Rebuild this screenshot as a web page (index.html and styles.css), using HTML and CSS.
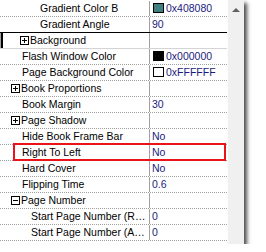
FILE: index.html
```html
<!DOCTYPE html>
<html>
  <head>
    <title>Properties</title>
    <link rel="stylesheet" href="styles.css">
  </head>
<body>
<div class = 'panel'>
  <div class = 'grid'>
    <div class = 'row'>
      <div class = 'name lv3'>Gradient Color B</div>
      <div class = 'value'><span class = 'swatch' style = 'background-color: #408080'></span>0x408080</div>
    </div>
    <div class = 'row'>
      <div class = 'name lv3'>Gradient Angle</div>
      <div class = 'value'>90</div>
    </div>
    <div class = 'row sel'>
      <div class = 'name lv2 group'><svg class = 'exp' width = '9' height = '9' viewBox = '0 0 9 9'><rect x = '0.5' y = '0.5' width = '8' height = '8' fill = '#fff' stroke = '#000'/><path d = 'M2 4.5h5M4.5 2v5' stroke = '#000'/></svg>Background</div>
      <div class = 'value'></div>
    </div>
    <div class = 'row'>
      <div class = 'name lv1'>Flash Window Color</div>
      <div class = 'value'><span class = 'swatch' style = 'background-color: #000000'></span>0x000000</div>
    </div>
    <div class = 'row'>
      <div class = 'name lv1'>Page Background Color</div>
      <div class = 'value'><span class = 'swatch' style = 'background-color: #ffffff'></span>0xFFFFFF</div>
    </div>
    <div class = 'row'>
      <div class = 'name lv1 group'><svg class = 'exp' width = '9' height = '9' viewBox = '0 0 9 9'><rect x = '0.5' y = '0.5' width = '8' height = '8' fill = '#fff' stroke = '#000'/><path d = 'M2 4.5h5M4.5 2v5' stroke = '#000'/></svg>Book Proportions</div>
      <div class = 'value'></div>
    </div>
    <div class = 'row'>
      <div class = 'name lv1'>Book Margin</div>
      <div class = 'value'>30</div>
    </div>
    <div class = 'row'>
      <div class = 'name lv1 group'><svg class = 'exp' width = '9' height = '9' viewBox = '0 0 9 9'><rect x = '0.5' y = '0.5' width = '8' height = '8' fill = '#fff' stroke = '#000'/><path d = 'M2 4.5h5M4.5 2v5' stroke = '#000'/></svg>Page Shadow</div>
      <div class = 'value'></div>
    </div>
    <div class = 'row'>
      <div class = 'name lv1'>Hide Book Frame Bar</div>
      <div class = 'value'>No</div>
    </div>
    <div class = 'row'>
      <div class = 'name lv1'>Right To Left</div>
      <div class = 'value'>No</div>
    </div>
    <div class = 'row'>
      <div class = 'name lv1'>Hard Cover</div>
      <div class = 'value'>No</div>
    </div>
    <div class = 'row'>
      <div class = 'name lv1'>Flipping Time</div>
      <div class = 'value'>0.6</div>
    </div>
    <div class = 'row'>
      <div class = 'name lv1 group'><svg class = 'exp' width = '9' height = '9' viewBox = '0 0 9 9'><rect x = '0.5' y = '0.5' width = '8' height = '8' fill = '#fff' stroke = '#000'/><path d = 'M2 4.5h5' stroke = '#000'/></svg>Page Number</div>
      <div class = 'value'></div>
    </div>
    <div class = 'row'>
      <div class = 'name lv2'>Start Page Number (Right To Left)</div>
      <div class = 'value'>0</div>
    </div>
    <div class = 'row'>
      <div class = 'name lv2'>Start Page Number (Actual Page)</div>
      <div class = 'value'>0</div>
    </div>
  </div>
  <div class = 'scrollbar'><span class = 'arrow'></span></div>
  <div class = 'mark'></div>
</div>
</body>
</html>
```

FILE: styles.css
```css
:root {
  --rowHeight: 16px;
  --line: #a0a0a0;
}

body {
  margin: 0;
  background: #fff;
  font-family: 'Liberation Sans', Arial, sans-serif;
  font-size: 10.5px;
}

.panel {
  position: relative;
  display: flex;
  width: 244px;
  height: 244px;
  background: #fff;
  box-shadow: 3px 3px 4px rgba(0, 0, 0, 0.7);
}

.grid {
  width: 227px;
  padding-top: 1px;
}

.row {
  display: flex;
  box-sizing: border-box;
  height: var(--rowHeight);
  border-bottom: 1px dotted var(--line);
  line-height: 15px;
}

.row.sel {
  margin-top: -1px;
  height: 17px;
  border-top: 1px solid #000;
  border-bottom: 1px solid #d4d4d4;
  box-shadow: inset 1px 0 #a0a0a0, inset 3px 0 #000;
}

.name {
  box-sizing: border-box;
  flex-shrink: 0;
  width: 150px;
  border-right: 1px solid var(--line);
  padding-right: 3px;
  color: #000;
  white-space: nowrap;
  overflow: hidden;
  text-overflow: ellipsis;
}

.name.lv1 { padding-left: 22px; }
.name.lv2 { padding-left: 31px; }
.name.lv3 { padding-left: 40px; }
.name.lv1.group { padding-left: 11px; }
.name.lv2.group { padding-left: 20px; }

.exp {
  vertical-align: -1px;
  margin-right: 1px;
}

.value {
  flex: 1;
  padding-left: 2px;
  color: #1c1c80;
  white-space: nowrap;
  overflow: hidden;
}

.swatch {
  display: inline-block;
  box-sizing: border-box;
  width: 11px;
  height: 10px;
  border: 1px solid #000;
  margin: 0 2px 0 1px;
  vertical-align: -1px;
}

.scrollbar {
  box-sizing: border-box;
  width: 17px;
  background: #f0f0f0;
  border-left: 1px solid #fbfbfb;
  display: flex;
  justify-content: center;
  align-items: flex-start;
  padding-top: 8px;
}

.arrow {
  width: 0;
  height: 0;
  border-left: 4px solid transparent;
  border-right: 4px solid transparent;
  border-bottom: 4px solid #606060;
}

.mark {
  position: absolute;
  left: 13px;
  top: 143px;
  width: 213px;
  height: 18px;
  box-sizing: border-box;
  border: 2px solid #e8141a;
}
```
